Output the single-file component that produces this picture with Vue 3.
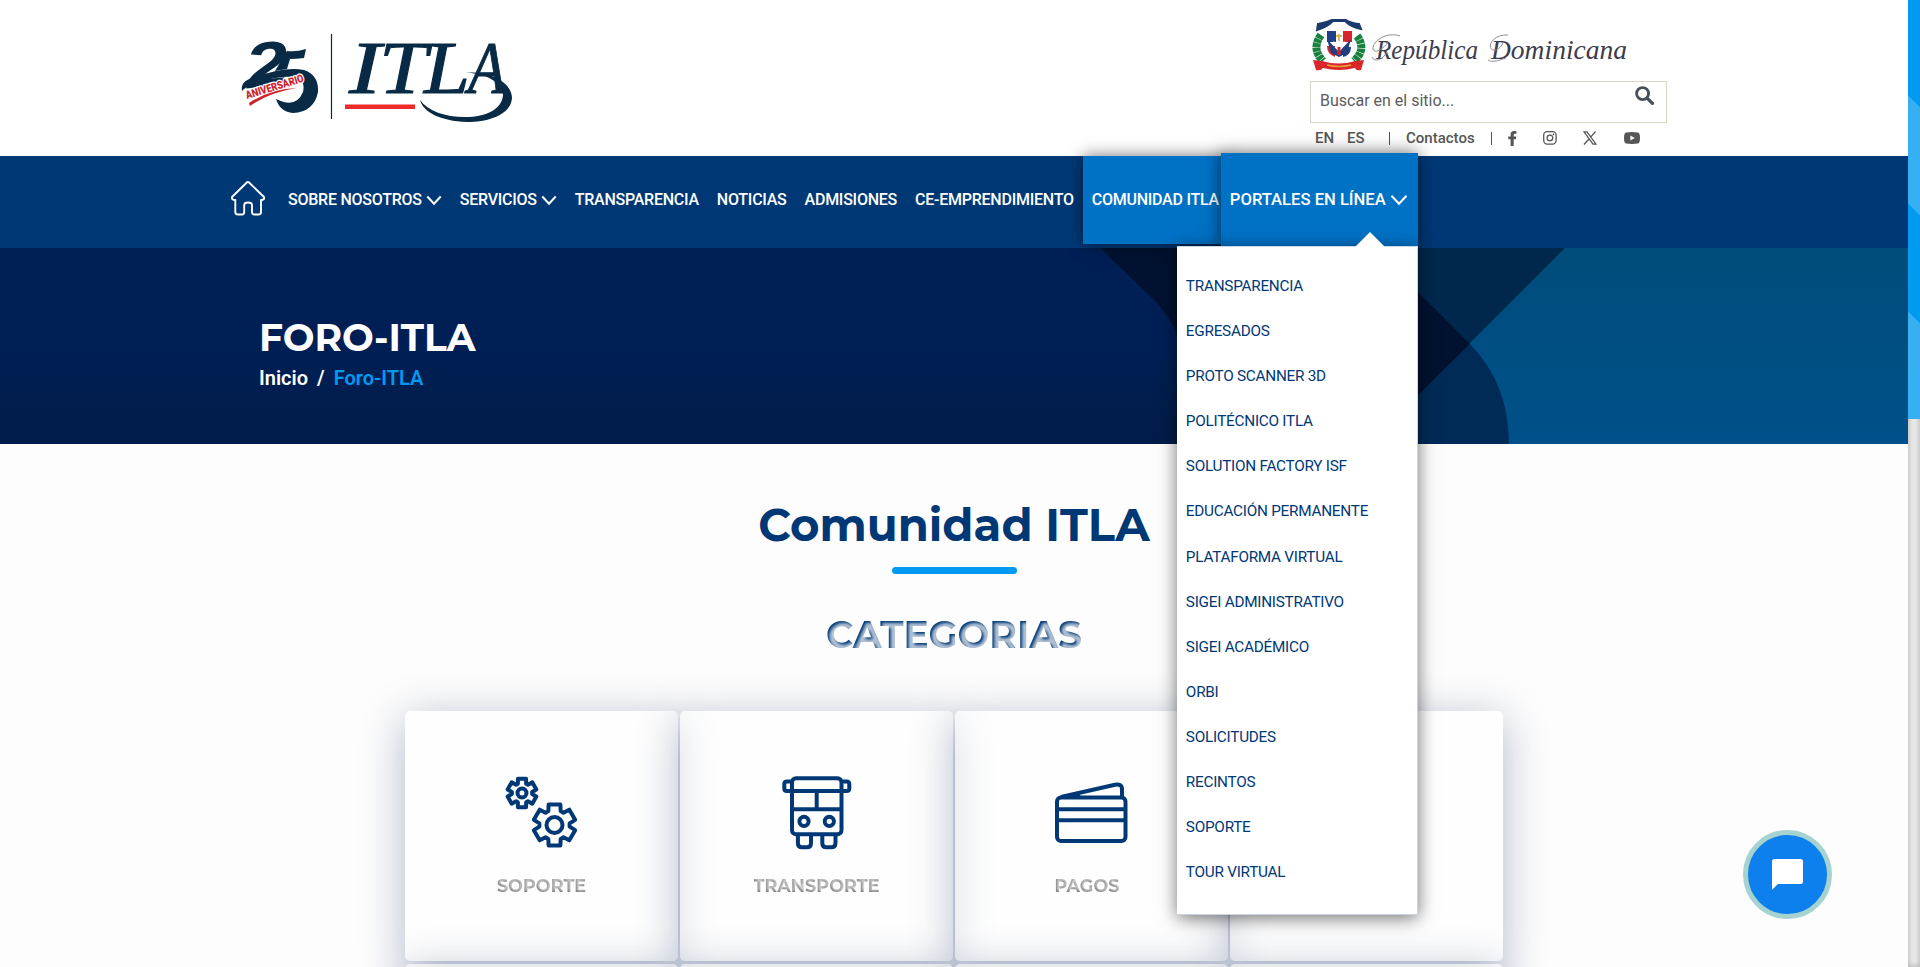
<script setup>
const navLinks = [
  { label: 'SOBRE NOSOTROS', arrow: true },
  { label: 'SERVICIOS', arrow: true },
  { label: 'TRANSPARENCIA' },
  { label: 'NOTICIAS' },
  { label: 'ADMISIONES' },
  { label: 'CE-EMPRENDIMIENTO' },
  { label: 'COMUNIDAD ITLA', active: true },
]
const portals = [
  'TRANSPARENCIA', 'EGRESADOS', 'PROTO SCANNER 3D', 'POLITÉCNICO ITLA',
  'SOLUTION FACTORY ISF', 'EDUCACIÓN PERMANENTE', 'PLATAFORMA VIRTUAL',
  'SIGEI ADMINISTRATIVO', 'SIGEI ACADÉMICO', 'ORBI', 'SOLICITUDES',
  'RECINTOS', 'SOPORTE', 'TOUR VIRTUAL',
]

// Outline of a six-toothed gear centred on the origin.
function gear(outer, inner) {
  const pts = []
  for (let i = 0; i < 6; i++) {
    const a = -90 + i * 60
    for (const [d, r] of [[-24, inner], [-16, outer], [16, outer], [24, inner]]) {
      const t = ((a + d) * Math.PI) / 180
      pts.push(`${(r * Math.cos(t)).toFixed(2)},${(r * Math.sin(t)).toFixed(2)}`)
    }
  }
  return pts.join(' ')
}
const smallGear = gear(14.8, 10.2)
const bigGear = gear(21.3, 15.2)
</script>

<template>
  <div class="page">
    <div class="content">
      <header class="header">
        <svg class="logo" width="310" height="120" viewBox="220 20 310 120">
          <g fill="#082a45" font-family="'Liberation Sans', sans-serif" font-weight="bold" font-style="italic">
            <text class="num" x="247" y="87" font-size="63" textLength="43" lengthAdjust="spacingAndGlyphs" transform="rotate(-6 260 80)">2</text>
            <path d="M287 51 Q297 52 306 49 L304 58 Q296 59 290 59 L287 69 L275 71 Z" />
            <path d="M242 91 Q240 80 256 77 Q285 66 304 70 Q319 75 318 92 Q314 112 293 113 Q280 112 276 99 Q296 109 303 92 Q307 75 283 77 Q262 79 244 89 Z" />
          </g>
          <text x="247" y="99" font-family="Roboto, sans-serif" font-weight="900" font-size="11" fill="#cf2027" stroke="#fff" stroke-width="2.5" paint-order="stroke" textLength="60" lengthAdjust="spacingAndGlyphs" transform="rotate(-17 247 99)">ANIVERSARIO</text>
          <path d="M249 103 Q270 89 297 88 Q270 92 250 106 Z" fill="#cf2027" />
          <path d="M331.500 34 V119" stroke="#082a45" stroke-width="1.2" />
          <g fill="#082a45" stroke="#082a45" stroke-width="1" font-family="'Liberation Serif', serif" font-style="italic" font-size="74">
            <text x="349" y="92.500" textLength="32" lengthAdjust="spacingAndGlyphs">I</text>
            <text x="379" y="92.500" textLength="48" lengthAdjust="spacingAndGlyphs">T</text>
            <text x="424" y="92.500" textLength="46" lengthAdjust="spacingAndGlyphs">L</text>
            <text x="468" y="92.500" textLength="38" lengthAdjust="spacingAndGlyphs">A</text>
          </g>
          <path d="M465 72.500 C494 71 512 84 512 98 C511 114 490 122 467 122 C440 121 423 112 420 100 C428 111 445 117 465 117 C487 117 502 109 503 95 C502 82 487 74 465 72.500 Z" fill="#082a45" />
          <rect x="345" y="104.500" width="70" height="4.500" fill="#ee2a2b" />
        </svg>

        <div class="tools">
          <svg class="country" width="330" height="66" viewBox="1310 12 330 66">
            <path d="M1317 30 Q1327 27 1333 21 H1345 Q1351 27 1361 29 L1359 24 Q1350 23 1346 20 H1332 Q1326 23 1318 24 Z" fill="#1d3a6e" stroke="#1d3a6e" stroke-width="2" />
            <path d="M1326 31 H1352 V50 Q1351 56 1339 59 Q1327 56 1326 50 Z" fill="#fff" />
            <path d="M1327 31 h9 v11 h-9z M1343 47 h8 q0 8 -8 10z" fill="#1f3f87" />
            <path d="M1343 31 h9 v11 h-9z M1327 46 h8 v11 q-8 -3 -8 -11z" fill="#d8232a" />
            <path d="M1327 39 L1339 52 L1351 39 L1347 53 L1339 57 L1331 53 Z" fill="#243e7c" />
            <path d="M1333 42 l6 7 l6 -7" fill="none" stroke="#fff" stroke-width="2.500" />
            <path d="M1339 34 v7 M1336 36 h6" stroke="#d9a52e" stroke-width="1.500" />
            <path d="M1339 47 v8" stroke="#d8232a" stroke-width="3" />
            <path d="M1321 35 Q1311 49 1323 61" fill="none" stroke="#18813f" stroke-width="8" stroke-dasharray="4 .5" />
            <path d="M1357 36 Q1367 49 1354 61" fill="none" stroke="#18813f" stroke-width="8" stroke-dasharray="4 .5" />
            <path d="M1313 60 L1322 61 Q1339 66 1355 61 L1364 60 L1361 70 Q1356 71 1355 68 Q1339 72 1323 68 Q1321 71 1316 70 Z" fill="#d8262b" />
            <path d="M1327 65 Q1339 68 1351 65" fill="none" stroke="#eaa23a" stroke-width="1.500" />
            <g font-family="'Liberation Serif', serif" font-style="italic" fill="#3c3c4a">
              <text x="1376" y="59" font-size="27" textLength="102" lengthAdjust="spacingAndGlyphs">República</text>
              <text x="1491" y="59" font-size="27" textLength="136" lengthAdjust="spacingAndGlyphs">Dominicana</text>
            </g>
            <g fill="none" stroke="#8d8d9a" stroke-width="1">
              <path d="M1400 36 C1386 31 1372 42 1373 49 C1374 54 1383 50 1388 42 M1372 57 C1374 62 1382 61 1387 52" />
              <path d="M1508 35 C1493 34 1486 47 1493 50 C1498 51 1503 45 1503 42 M1488 60 C1492 63 1500 60 1506 58" />
            </g>
          </svg>
          <div class="search">
            <span>Buscar en el sitio...</span>
            <svg width="19" height="19" viewBox="0 0 18 18"><circle cx="7.200" cy="7.200" r="5.700" fill="none" stroke="#46505a" stroke-width="2.700" /><path d="M11.500 11.500 L16.500 16.500" stroke="#46505a" stroke-width="3.200" stroke-linecap="round" /></svg>
          </div>
          <div class="links">
            <a class="lang">EN</a><a class="es">ES</a><i class="bar one"></i><a class="contact">Contactos</a><i class="bar"></i>
            <svg class="fb" width="10" height="15" viewBox="0 0 10 15"><path d="M2.600 15 V8.300 H.2 V5.500 H2.600 V3.500 Q2.600 .2 6 .1 L8.500 .3 V2.700 H7.200 Q5.700 2.700 5.700 4 V5.500 H8.300 L7.900 8.300 H5.700 V15 Z" /></svg>
            <svg class="ig" width="14" height="14" viewBox="0 0 14 14" fill="none"><rect x=".7" y=".7" width="12.400" height="12.400" rx="3.500" stroke="#565656" stroke-width="1.300" /><circle cx="6.900" cy="6.900" r="2.800" stroke="#565656" stroke-width="1.300" /><circle cx="10.500" cy="3.300" r=".9" fill="#565656" /></svg>
            <svg class="tw" width="14" height="14" viewBox="0 0 14 14" fill="none" stroke="#565656"><path d="M1 .8 H4 L13 13.200 H10 Z M12.500 .5 L7.800 5.900 M6.200 7.700 L1 13.500" stroke-width="1.300" /></svg>
            <svg class="yt" width="16" height="12" viewBox="0 0 16 12"><path d="M2 .4 Q8 -.3 14 .4 Q16 .8 16 6 Q16 11.200 14 11.600 Q8 12.300 2 11.600 Q0 11.200 0 6 Q0 .8 2 .4 Z" /><path d="M6.400 3.500 V8.500 L10.700 6 Z" fill="#fff" /></svg>
          </div>
        </div>
      </header>

      <nav class="nav">
        <a class="home">
          <svg width="36" height="36" viewBox="0 0 36 36" fill="none" stroke="#fff" stroke-width="1.900" stroke-linejoin="round"><path d="M17.300 2 Q18 1.700 18.800 2.300 L34 17 Q35 20 31 20 V32 Q31 34.500 28.500 34.500 H24.500 Q22 34.500 22 32 V25 Q22 22.500 18 22.500 Q14.200 22.500 14.200 25 V32 Q14.200 34.500 12 34.500 H8 Q5.300 34.500 5.300 32 V20 Q1.300 20 2 17 Z" /></svg>
        </a>
        <a v-for="l in navLinks" :key="l.label" class="nav-link" :class="{ active: l.active }">
          <span>{{ l.label }}</span>
          <svg v-if="l.arrow" width="16" height="11" viewBox="0 0 16 11"><path d="M1.300 1.500 L8 8.800 L14.700 1.500" fill="none" stroke="#fff" stroke-width="2" /></svg>
        </a>
        <div class="portals">
          <span>PORTALES EN LÍNEA</span>
          <svg width="18" height="12" viewBox="0 0 18 12"><path d="M1.500 1.800 L9 9.800 L16.500 1.800" fill="none" stroke="#fff" stroke-width="2" /></svg>
          <i class="caret"></i>
          <ul class="menu">
            <li v-for="p in portals" :key="p">{{ p }}</li>
          </ul>
        </div>
      </nav>

      <section class="banner">
        <svg class="banner-art" width="1908" height="196" viewBox="0 248 1908 196">
          <defs>
            <linearGradient id="navy" x1="0" y1="0" x2="0" y2="1"><stop offset="0" stop-color="#001f55" /><stop offset=".5" stop-color="#001f55" /><stop offset="1" stop-color="#001c48" /></linearGradient>
            <linearGradient id="teal" x1="0" y1="0" x2="0" y2="1"><stop offset="0" stop-color="#004c7a" /><stop offset="1" stop-color="#00518a" /></linearGradient>
          </defs>
          <rect y="248" width="1908" height="196" fill="url(#teal)" />
          <path d="M1000 248 H1565 L1369 444 H1000 Z" fill="#00284d" />
          <path d="M1374 248 L1470 344 Q1509 384 1509 444 H1369 L1470 344 Z" fill="#002b57" />
          <path d="M1000 248 H1374 L1470 344 L1369 444 H1000 Z" fill="#001230" />
          <path d="M0 248 H1100 L1156 302 Q1196 344 1196 444 H0 Z" fill="url(#navy)" />
        </svg>
        <div class="banner-text">
          <h1>FORO-ITLA</h1>
          <p><b>Inicio</b><b class="sep">/</b><b class="here">Foro-ITLA</b></p>
        </div>
      </section>

      <main class="main">
        <h2>Comunidad ITLA</h2>
        <div class="rule"></div>
        <h3>CATEGORIAS</h3>
        <div class="grid">
          <article class="card">
            <svg width="80" height="80" viewBox="502 772 80 80" class="ico">
              <g transform="translate(522 793)"><polygon :points="smallGear" /><circle r="4.500" /></g>
              <g transform="translate(554.500 825)"><polygon :points="bigGear" /><circle r="8" /></g>
            </svg>
            <span class="label">SOPORTE</span>
          </article>
          <article class="card">
            <svg width="80" height="80" viewBox="777 772 80 80" class="ico">
              <rect x="792" y="778.300" width="49.500" height="56" rx="4" />
              <path d="M792 791 H841.500 M792 809.300 H841.500 M816.700 791 V809" />
              <path d="M791 781.500 H787 Q784.300 781.500 784.300 784 V788.500 Q784.300 791 787 791 H792 M842.500 781.500 H846.500 Q849.300 781.500 849.300 784 V788.500 Q849.300 791 846.500 791 H841.500" />
              <circle cx="804" cy="821.300" r="4.600" /><circle cx="829.300" cy="821.300" r="4.600" />
              <path d="M797.900 835 V843 Q797.900 847.300 802 847.300 H807 Q811 847.300 811 843 V835 M822.300 835 V843 Q822.300 847.300 826.300 847.300 H831.300 Q835.500 847.300 835.500 843 V835" />
            </svg>
            <span class="label">TRANSPORTE</span>
          </article>
          <article class="card">
            <svg width="80" height="80" viewBox="1052 772 80 80" class="ico">
              <rect x="1057" y="797.500" width="68.500" height="43.500" rx="4" />
              <path d="M1057 809.300 H1125 M1057 820.300 H1125 M1061 797 L1115 784.800 Q1122 783.500 1122 789 V797 M1068 796.800 L1080 794" />
            </svg>
            <span class="label pagos">PAGOS</span>
          </article>
          <article class="card"></article>
          <article v-for="n in 4" :key="n" class="card"></article>
        </div>
      </main>

      <button class="chat" aria-label="Chat">
        <svg width="31" height="31" viewBox="0 0 31 31"><path d="M2.500 0 H28.500 Q31 0 31 2.500 V22.500 Q31 25 28.500 25 H6 L0 30.700 V2.500 Q0 0 2.500 0 Z" fill="#fff" /></svg>
      </button>
    </div>

    <div class="scrollbar"><div class="thumb"></div></div>
  </div>
</template>

<style>
html, body { margin: 0; overflow: hidden; }
</style>

<style scoped>
.page { display: flex; width: 1920px; height: 967px; overflow: hidden; font-family: Roboto, "Liberation Sans", sans-serif; }
.content { position: relative; display: flex; flex-direction: column; width: 1908px; height: 967px; overflow: hidden; background: #fdfdfd; }
.header { flex: none; display: flex; justify-content: space-between; box-sizing: border-box; height: 156px; padding: 0 241px 0 220px; background: #fff; }
.logo { margin-top: 20px; }
.tools { width: 357px; padding-top: 12px; }
.country { display: block; }
.search { display: flex; justify-content: space-between; box-sizing: border-box; height: 42px; margin-top: 3px; padding: 0 12px 0 9px; border: 1px solid #d9d6c6; font: 16px/38px Roboto, sans-serif; color: #5c5c5c; }
.search svg { margin-top: 4px; }
.links { display: flex; align-items: center; height: 30px; padding-left: 5px; font-size: 15px; font-weight: 500; color: #565656; }
.links svg { flex: none; fill: #565656; }
.links .ig, .links .tw { fill: none; }
.lang { width: 32px; }
.es { width: 42px; }
.bar { width: 1px; height: 13px; background: #7d4046; }
.contact { width: 85px; padding-left: 16px; }
.fb { margin-left: 16px; }
.ig { margin-left: 25px; }
.tw { margin-left: 26px; }
.yt { margin-left: 27px; }

.nav { position: relative; z-index: 5; flex: none; display: flex; height: 92px; padding-left: 230px; background: #003876; }
.home { width: 49px; padding-top: 24px; }
.nav-link { display: flex; align-items: center; height: 88px; padding: 0 9px; gap: 4px; font-size: 16px; font-weight: 500; color: #fff; white-space: nowrap; }
.nav-link span, .portals span { position: relative; top: -1px; }
.nav-link span { letter-spacing: -.245px; }
.nav-link.active { background: #0072c6; box-shadow: 0 0 15px rgba(0, 0, 0, .55); }
.portals { position: relative; z-index: 2; display: flex; align-items: center; box-sizing: border-box; width: 197px; height: 94px; margin: -3px 0 0 -7px; padding: 0 9px; gap: 4px; background: #0072c6; box-shadow: 0 0 16px rgba(0, 0, 0, .6); font-size: 16.600px; font-weight: 500; color: #fff; white-space: nowrap; }
.caret { position: absolute; z-index: 1; right: 33px; bottom: 0; border: 15px solid transparent; border-top: 0; border-bottom: 15px solid #fff; }
.menu { position: absolute; top: 93px; right: 0; box-sizing: border-box; width: 241px; height: 669px; margin: 0; padding: 17px 9px; list-style: none; background: #fff; border: 1px solid #c9d6e2; border-width: 1px 1px 1px 0; box-shadow: 0 3px 17px rgba(0, 0, 0, .55); font-size: 15.300px; font-weight: 400; letter-spacing: -.25px; color: #003876; }
.menu li { height: 45.100px; line-height: 45.600px; }

.banner { position: relative; flex: none; height: 196px; overflow: hidden; }
.banner-art { position: absolute; inset: 0; }
.banner-text { position: relative; padding: 67px 0 0 259px; color: #fff; }
h1, h2, h3 { margin: 0; font-family: Montserrat, Inter, sans-serif; font-weight: 700; }
h1 { font-size: 37.600px; line-height: 45px; }
p { display: flex; margin: 6px 0 0; font-size: 20px; line-height: 24px; }
p b { font-weight: 600; }
.sep { margin: 0 9px; }
.here { color: #009bf0; }

.main { flex: 1; display: flex; flex-direction: column; align-items: center; }
h2 { margin-top: 54px; font-size: 45px; line-height: 54px; color: #003876; }
.rule { width: 125px; height: 7px; margin-top: 15px; border-radius: 4px; background: #009bf0; }
h3 { margin-top: 38px; font-size: 37.600px; line-height: 45px; color: transparent; background: #003876; background-clip: text; -webkit-background-clip: text; text-shadow: 2px 2px 3px rgba(255, 255, 255, .7); }
.grid { display: grid; grid-template-columns: repeat(4, 273px); gap: 3px 2px; margin-top: 54px; }
.card { display: flex; flex-direction: column; align-items: center; box-sizing: border-box; height: 250px; padding-top: 61px; border-radius: 5px; background: rgba(255, 255, 255, .5); box-shadow: 0 8px 45px rgba(15, 45, 100, .33); }
.ico { fill: none; stroke: #003876; stroke-width: 4; stroke-linejoin: round; }
.label { margin-top: 23px; font: 700 17.600px/22px Montserrat, Inter, sans-serif; color: transparent; background: #707070; background-clip: text; -webkit-background-clip: text; text-shadow: 1px -1px 3px rgba(255, 255, 255, .75); }
.pagos { padding-right: 9px; }

.chat { position: absolute; left: 1743px; top: 830px; display: flex; align-items: center; justify-content: center; box-sizing: border-box; width: 89px; height: 89px; padding: 0; border: 5px solid #a6d2d0; border-radius: 50%; background: #0d80ee; }

.scrollbar { width: 12px; background: #ececec; box-shadow: inset 0 0 6px rgba(0, 0, 0, .3); }
.thumb { height: 419px; background: repeating-linear-gradient(45deg, #36aff3 0 76.300px, #009bf0 76.300px 152.600px); }
</style>
